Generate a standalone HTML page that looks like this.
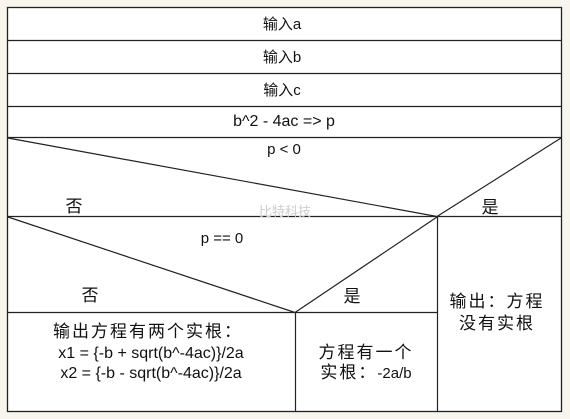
<!DOCTYPE html>
<html><head><meta charset="utf-8"><style>
html,body{margin:0;padding:0;background:#f8f5ee;}
svg{display:block;}
text{font-family:"Liberation Sans","Noto Sans CJK SC",sans-serif;font-size:14px;fill:#111;}
.c{font-size:16px;letter-spacing:2px;}
</style></head><body>
<svg width="570" height="419" viewBox="0 0 570 419">
<rect x="7.5" y="7.5" width="554" height="404" fill="#fff" stroke="#222" stroke-width="1.3"/>
<g stroke="#222" stroke-width="1.2" fill="none">
<line x1="7.5" y1="40.5" x2="561.5" y2="40.5"/>
<line x1="7.5" y1="73.5" x2="561.5" y2="73.5"/>
<line x1="7.5" y1="106.5" x2="561.5" y2="106.5"/>
<line x1="7.5" y1="137.5" x2="561.5" y2="137.5"/>
<line x1="8" y1="138" x2="437" y2="216.5"/>
<line x1="437" y1="216.5" x2="561" y2="138"/>
<line x1="7.5" y1="216.5" x2="561.5" y2="216.5"/>
<line x1="437.5" y1="216.5" x2="437.5" y2="411.5"/>
<line x1="8" y1="217" x2="295" y2="312.5"/>
<line x1="295" y1="312.5" x2="437" y2="217"/>
<line x1="7.5" y1="312.5" x2="437.5" y2="312.5"/>
<line x1="295.5" y1="312.5" x2="295.5" y2="411.5"/>
</g>
<g text-anchor="middle">
<text x="282" y="29" style="font-size:15px">输入a</text>
<text x="282" y="62" style="font-size:15px">输入b</text>
<text x="282" y="95" style="font-size:15px">输入c</text>
<text x="284" y="126" style="font-size:16px">b^2 - 4ac =&gt; p</text>
<text x="284" y="154" style="font-size:15px">p &lt; 0</text>
<text x="74" y="212" style="font-size:17px">否</text>
<text x="490" y="213" style="font-size:17px">是</text>
<text x="222" y="243" style="font-size:15px">p == 0</text>
<text x="90" y="301" style="font-size:17px">否</text>
<text x="352" y="302" style="font-size:17px">是</text>
<text x="148" y="337" class="c" style="font-size:17px">输出方程有两个实根：</text>
<text x="151" y="358" style="font-size:16px">x1 = {-b + sqrt(b^-4ac)}/2a</text>
<text x="151" y="378" style="font-size:16px">x2 = {-b - sqrt(b^-4ac)}/2a</text>
<text x="366" y="358" class="c" style="font-size:17px">方程有一个</text>
<text x="366" y="378"><tspan class="c" style="font-size:17px">实根：</tspan><tspan style="font-size:15px">-2a/b</tspan></text>
<text x="497" y="307" class="c" style="font-size:17px">输出：方程</text>
<text x="497" y="329" class="c" style="font-size:17px">没有实根</text>
<text x="285" y="216" style="font-size:13px;fill:#ccc">比特科技</text>
</g>
</svg>
</body></html>
